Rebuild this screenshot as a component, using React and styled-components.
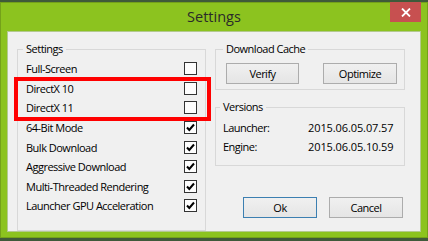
import styled, { createGlobalStyle } from "styled-components";

const GlobalStyle = createGlobalStyle`
  html, body {
    margin: 0;
    padding: 0;
    background: #3f5a3a;
  }
  body {
    font-family: "Open Sans", "Liberation Sans", sans-serif;
  }
`;

const Window = styled.div`
  box-sizing: border-box;
  width: 428px;
  height: 236px;
  margin-top: 2px;
  background: #8cc31f;
  border: 1px solid #74a11a;
  display: flex;
  flex-direction: column;
`;

const TitleBar = styled.div`
  height: 28px;
  display: flex;
  align-items: flex-start;
  justify-content: center;
  position: relative;
`;

const Title = styled.div`
  font-size: 14.5px;
  line-height: 28px;
  color: #2a2a2a;
`;

const CloseButton = styled.div`
  position: absolute;
  right: 6px;
  top: -1px;
  width: 31px;
  height: 20px;
  background: #c75050;
  display: flex;
  align-items: center;
  justify-content: center;
`;

const Client = styled.div`
  box-sizing: border-box;
  margin: 0 6px;
  height: 201px;
  background: #f0f0f0;
  border: 1px solid #b3c98f;
  padding: 10px 0 0 9px;
  display: flex;
  gap: 9px;
  position: relative;
  font-size: 11px;
  letter-spacing: -0.5px;
  color: #000;
`;

const Group = styled.fieldset`
  box-sizing: border-box;
  margin: ${(p) => p.$mt || 0}px 0 0 0;
  padding: ${(p) => p.$pad};
  border: 1px solid #d8d8d8;
  min-width: 0;
`;

const Legend = styled.legend`
  padding: 0 3px;
  margin-left: -3px;
  line-height: 14px;
  font-size: 11px;
`;

const Row = styled.div`
  height: 19.6px;
  display: flex;
  align-items: center;
  justify-content: space-between;
`;

const Box = styled.div`
  box-sizing: border-box;
  width: 13px;
  height: 13px;
  border: 1px solid #333;
  background: #fdfdfd;
  display: flex;
  align-items: center;
  justify-content: center;
`;

const Column = styled.div`
  width: 190px;
  display: flex;
  flex-direction: column;
`;

const ButtonRow = styled.div`
  display: flex;
  justify-content: ${(p) => p.$justify || "space-between"};
  gap: ${(p) => p.$gap || 0}px;
  margin: ${(p) => p.$margin || 0};
`;

const Button = styled.button`
  box-sizing: border-box;
  width: ${(p) => p.$w}px;
  height: 21px;
  padding: 0;
  font-family: inherit;
  font-size: 11px;
  letter-spacing: inherit;
  color: #000;
  border: 1px solid ${(p) => (p.$default ? "#3c7fb1" : "#acacac")};
  background: linear-gradient(#f0f0f0, #e5e5e5);
`;

const VersionRow = styled.div`
  height: 19px;
  display: flex;
  align-items: center;
`;

const VersionLabel = styled.span`
  width: 85px;
`;

const VersionValue = styled.span`
  letter-spacing: -0.1px;
`;

const Highlight = styled.div`
  position: absolute;
  left: 6px;
  top: 45px;
  width: 197px;
  height: 44px;
  box-sizing: border-box;
  border: 4px solid #ff0000;
  pointer-events: none;
`;

const settings = [
  { name: "Full-Screen", on: false },
  { name: "DirectX 10", on: false },
  { name: "DirectX 11", on: false },
  { name: "64-Bit Mode", on: true },
  { name: "Bulk Download", on: true },
  { name: "Aggressive Download", on: true },
  { name: "Multi-Threaded Rendering", on: true },
  { name: "Launcher GPU Acceleration", on: true },
];

function Check() {
  return (
    <svg width="9" height="9" viewBox="0 0 9 9">
      <path d="M1 4.5 L3.3 7 L8 1.5" fill="none" stroke="#000" strokeWidth="2" />
    </svg>
  );
}

export default function App() {
  return (
    <>
      <GlobalStyle />
      <Window>
        <TitleBar>
          <Title>Settings</Title>
          <CloseButton>
            <svg width="10" height="9" viewBox="0 0 10 9">
              <path d="M1 0.5 L9 8.5 M9 0.5 L1 8.5" stroke="#fff" strokeWidth="1.8" />
            </svg>
          </CloseButton>
        </TitleBar>
        <Client>
          <Group $pad="3px 8px 4px 8px" style={{ width: 189 }}>
            <Legend>Settings</Legend>
            {settings.map((s) => (
              <Row key={s.name}>
                <span>{s.name}</span>
                <Box>{s.on && <Check />}</Box>
              </Row>
            ))}
          </Group>
          <Column>
            <Group $pad="7px 7px 5px 10px">
              <Legend>Download Cache</Legend>
              <ButtonRow>
                <Button $w={73}>Verify</Button>
                <Button $w={74}>Optimize</Button>
              </ButtonRow>
            </Group>
            <Group $mt={10} $pad="4px 8px 9px 7px">
              <Legend>Versions</Legend>
              <VersionRow>
                <VersionLabel>Launcher:</VersionLabel>
                <VersionValue>2015.06.05.07.57</VersionValue>
              </VersionRow>
              <VersionRow>
                <VersionLabel>Engine:</VersionLabel>
                <VersionValue>2015.06.05.10.59</VersionValue>
              </VersionRow>
            </Group>
            <ButtonRow $justify="flex-end" $gap={12} $margin="31px 2px 0 0">
              <Button $w={74} $default>
                Ok
              </Button>
              <Button $w={74}>Cancel</Button>
            </ButtonRow>
          </Column>
          <Highlight />
        </Client>
      </Window>
    </>
  );
}
